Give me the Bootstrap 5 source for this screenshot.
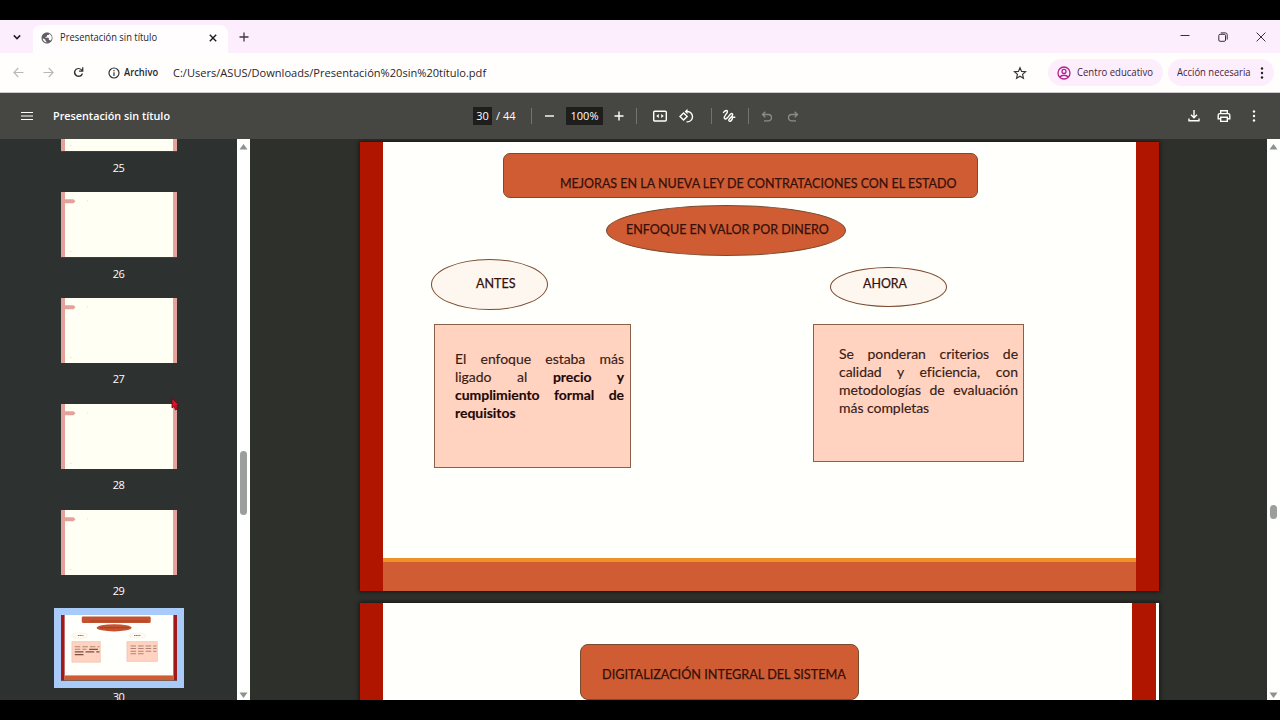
<!DOCTYPE html>
<html lang="es">
<head>
<meta charset="utf-8">
<meta name="viewport" content="width=device-width, initial-scale=1">
<title>Presentación sin título</title>
<link href="https://cdn.jsdelivr.net/npm/bootstrap@5.3.0/dist/css/bootstrap.min.css" rel="stylesheet">
<script src="https://cdn.jsdelivr.net/npm/bootstrap@5.3.0/dist/js/bootstrap.bundle.min.js"></script>
<style>
  body { font-family: "Open Sans", "Noto Sans", sans-serif; font-size: 10.5px; line-height: 1.3; background: #000; color: #2b2528; }
  svg { display: block; flex: none; }
  .window { width: 1280px; height: 720px; padding: 20px 0; }
  .tx { display: inline-block; white-space: nowrap; transform-origin: 0 50%; transform: scaleX(var(--s, 1)); }

  .tabstrip { height: 33px; background: #fdeefe; }
  .tab-search { width: 33px; padding-left: 12px; }
  .tab-open { width: 195px; height: 28px; margin-top: 5px; background: #fffdfd; border-radius: 8px 8px 0 0; padding: 0 7px 3px 8px; }
  .tab-open .tx { margin-left: 7px; width: 144px; flex: none; padding-top: 1px; }
  .tab-open .close-x { margin-left: 5px; }
  .win-btns { padding-right: 14px; gap: 28px; }

  .addressbar { height: 40px; background: #fffefd; border-bottom: 1px solid #cfcacd; }
  .addressbar .tx { padding-top: 1px; }
  .url { font-size: 11.5px; }
  .chip { height: 27px; border-radius: 14px; background: #fdeefd; color: #43233c; }

  .pdfbar { height: 46px; background: #464742; color: #fff; font-size: 11px; }
  .pdfbar .doc-title { font-size: 11.5px; font-weight: 600; padding-top: 1px; }
  .field-box { height: 18px; background: #1e1e1d; line-height: 18px; }
  .vsep { width: 1px; height: 16px; background: #72736f; }

  .viewer { height: 561px; }
  .thumbs { width: 237px; background: #2d312f; color: #fff; font-size: 11px; }
  .thumb-list { margin-top: -52.6px; }
  .thumb { width: 118px; height: 105.8px; margin-left: 60px; }
  .thumb .sheet { width: 116px; height: 65.3px; margin: 0 1px; }
  .thumb .num { height: 40.5px; padding-top: 9px; padding-right: 1px; line-height: 14px; letter-spacing: -.5px; }
  .thumb.active .sheet { box-shadow: 0 0 0 7px #a8cbfa; }

  .sbar { width: 13px; background: #fffffe; padding: 5px 0 2px; }
  .sbar .handle { width: 7px; border-radius: 4px; background: #9c9e9c; }
  .pages { background: #2e302b; padding: 3px 0 0 110px; }
  .page { position: relative; width: 799px; background: #fffffc; box-shadow: 0 0 4px 1px #161713; color: #35100a; font-family: Lato, "Open Sans", sans-serif; font-size: 13.5px; line-height: 18px; }
  .page .tx { -webkit-text-stroke: .25px #35100a; }
  .page-30 { height: 449px; margin-bottom: 12px; }
  .page-31 { height: 449px; }
  .edge { position: absolute; top: 0; bottom: 0; background: #b01500; }
  .shape { position: absolute; border: 1px solid #7a4a30; }
  .orange { background: #cf5c33; }
  .cream { background: #fef7ef; }
  .note { background: #ffd3c0; border-color: #8a6048; font-size: 14px; line-height: 17.9px; letter-spacing: -.04px; color: #3a1a14; -webkit-text-stroke: .15px #3a1a14; }
  .note b { color: #1c0806; }
  .note div { text-align: justify; text-align-last: justify; }
  .note div:last-child { text-align-last: left; }
  .oval { border-radius: 50%; }
  .foot { position: absolute; left: 23px; right: 23px; bottom: 0; height: 33px; border-top: 4px solid #f09128; }
  .pointer { position: absolute; left: 171px; top: 397px; }
</style>
</head>
<body>
<div class="window d-flex flex-column overflow-hidden position-relative">

  <!-- Tab strip -->
  <header class="tabstrip d-flex">
    <div class="tab-search d-flex align-items-center"><svg width="10" height="10" viewBox="0 0 10 10" fill="none" stroke="#222" stroke-width="1.5"><path d="M1.8 3.4 5 6.6l3.200-3.200"/></svg></div>
    <div class="tab-open d-flex align-items-center">
      <svg width="12" height="12" viewBox="0 0 24 24" fill="#5f5f63"><path d="M12 1C5.900 1 1 5.900 1 12s4.900 11 11 11 11-4.900 11-11S18.100 1 12 1zM3.500 12.500l5.500 3v2l2 2v1.400C6.600 20.400 3.200 16.800 3.500 12.500zM18.800 17.300c-.3-.9-1.100-1.500-2.100-1.500h-1v-3.200c0-.6-.5-1.100-1.100-1.100H9V9.300h2c.6 0 1.100-.5 1.100-1.100V6h2.200c1.200 0 2.100-1 2.100-2.100v-.4c3.100 1.300 5.200 4.700 5.200 8.500 0 2-1 4-2.800 5.300z"/></svg>
      <span class="tx" style="--s:.891">Presentación sin título</span>
      <svg class="close-x" width="8" height="8" viewBox="0 0 8 8" stroke="#1d1b1d" stroke-width="1.400"><path d="M.8.8l6.400 6.400M7.200.8.8 7.200"/></svg>
    </div>
    <div class="d-flex align-items-center ps-2 ms-1"><svg style="margin-left:-1px" width="10" height="10" viewBox="0 0 10 10" stroke="#4a3347" stroke-width="1.300"><path d="M5 .5v9M.5 5h9"/></svg></div>
    <div class="win-btns d-flex align-items-center ms-auto">
      <svg width="10" height="10" viewBox="0 0 10 10" stroke="#3a2e38"><path d="M.5 3.500h9"/></svg>
      <svg width="10" height="10" viewBox="0 0 10 10" fill="none" stroke="#3a2e38"><rect x=".8" y="2.300" width="6.700" height="7" rx="1.300"/><path d="M2.700.9H7.500A1.800 1.800 0 0 1 9.200 2.700V7.600"/></svg>
      <svg width="10" height="10" viewBox="0 0 10 10" stroke="#3a2e38"><path d="M.6.6l8.800 8.800M9.400.6.6 9.400"/></svg>
    </div>
  </header>

  <!-- Address bar -->
  <nav class="addressbar d-flex align-items-center">
    <svg style="margin-left:13px" width="11" height="11" viewBox="0 0 11 11" fill="none" stroke="#b9b6b7" stroke-width="1.100"><path d="M10.500 5.500H1M5.300 1 .9 5.500l4.400 4.500"/></svg>
    <svg style="margin-left:19px" width="11" height="11" viewBox="0 0 11 11" fill="none" stroke="#b9b6b7" stroke-width="1.100"><path d="M.5 5.500H10M5.700 1l4.400 4.500L5.700 10"/></svg>
    <svg style="margin-left:18px" width="13" height="13" viewBox="0 0 24 24" fill="#333"><path d="M12 20.500A8.500 8.500 0 1 1 18.600 6.600V2.500h2.400v8h-8V8.100h4.300A6.100 6.100 0 1 0 17.900 14h2.500A8.500 8.500 0 0 1 12 20.500z"/></svg>
    <svg style="margin-left:23px" width="12" height="12" viewBox="0 0 12 12" fill="none" stroke="#333" stroke-width="1.200"><circle cx="6" cy="6" r="5"/><path d="M6 5.300V9M6 3v1.200"/></svg>
    <span class="fw-semibold" style="width:52.500px;padding-left:4px"><span class="tx" style="--s:.89">Archivo</span></span>
    <span class="url"><span class="tx" style="--s:.962">C:/Users/ASUS/Downloads/Presentación%20sin%20título.pdf</span></span>
    <div class="d-flex align-items-center ms-auto">
      <svg width="14" height="14" viewBox="0 0 24 24" fill="none" stroke="#383438" stroke-width="2"><path d="m12 3 2.700 6.200 6.800.6-5.100 4.500 1.500 6.600L12 17.400l-5.900 3.500 1.500-6.600-5.100-4.500 6.800-.6z"/></svg>
      <div class="chip d-flex align-items-center" style="width:115px;margin-left:21px;padding-left:9px">
        <svg width="14" height="14" viewBox="0 0 14 14" fill="none" stroke="#b0208c" stroke-width="1.300"><circle cx="7" cy="7" r="6"/><circle cx="7" cy="5.400" r="2"/><path d="M2.800 11.200C4.500 8.600 9.500 8.600 11.200 11.200"/></svg>
        <span class="tx" style="--s:.909;margin-left:6px">Centro educativo</span>
      </div>
      <div class="chip d-flex align-items-center" style="width:106px;margin:0 6px 0 5px;padding-left:9px">
        <span style="width:80px"><span class="tx" style="--s:.9">Acción necesaria</span></span>
        <svg style="margin-left:3px" width="4" height="14" viewBox="0 0 4 14" fill="#222"><circle cx="2" cy="2.500" r="1.200"/><circle cx="2" cy="7" r="1.200"/><circle cx="2" cy="11.500" r="1.200"/></svg>
      </div>
    </div>
  </nav>

  <!-- PDF viewer toolbar -->
  <div class="pdfbar d-flex align-items-center flex-shrink-0">
    <svg style="margin-left:21px" width="12" height="10" viewBox="0 0 12 10" stroke="#fff" stroke-width="1.200"><path d="M0 1.500h12M0 5h12M0 8.500h12"/></svg>
    <span class="doc-title" style="width:440px;padding-left:20px"><span class="tx" style="--s:.939">Presentación sin título</span></span>
    <span class="field-box text-center" style="width:19px">30</span>
    <span style="margin-left:4px;width:20px" class="text-nowrap">/ 44</span>
    <span class="vsep" style="margin-left:15px"></span>
    <svg style="margin-left:10px" width="16" height="16" viewBox="0 0 16 16" stroke="#fff" stroke-width="1.400"><path d="M3 8h9"/></svg>
    <span class="field-box text-center" style="width:37px;margin-left:8px">100%</span>
    <svg style="margin-left:8px" width="16" height="16" viewBox="0 0 16 16" stroke="#fff" stroke-width="1.400"><path d="M3.500 8h9M8 3.500v9"/></svg>
    <span class="vsep" style="margin-left:9px"></span>
    <svg style="margin-left:15px" width="16" height="16" viewBox="0 0 16 16" fill="none" stroke="#fff" stroke-width="1.400"><rect x="1.700" y="3.200" width="12.600" height="9.800" rx="1"/><path d="M6.800 5.900 4.200 8l2.600 2.100zM9.200 5.900 11.800 8l-2.600 2.100z" fill="#fff" stroke="none"/></svg>
    <svg style="margin-left:10px" width="17" height="16" viewBox="0 0 17 16" fill="none" stroke="#fff" stroke-width="1.400"><path d="M5.600 4.900 9.200 8.500 5.600 12.100 2 8.500z"/><path d="M8.700 3.500h.6a5.200 5.200 0 0 1 0 10.400H8.500"/><path d="M9.500.8v5.400L6.700 3.500z" fill="#fff" stroke="none"/></svg>
    <span class="vsep" style="margin-left:16px"></span>
    <svg style="margin-left:9px" width="16" height="16" viewBox="0 0 16 16" fill="none" stroke="#fff" stroke-width="1.400" stroke-linecap="round"><path d="M2.500 4.400C4.500 2 7 1.800 6.300 4.200 5.700 6 2.500 8.300 3.300 10.300 4.300 12.500 7.500 8.800 9 6.700 11 4.200 12.600 6 11 8.200 9.500 10.300 7.300 11 7.800 12.500 8.500 14.400 11.500 12.500 11.500 9.500M11.500 9.300h2.300"/></svg>
    <span class="vsep" style="margin-left:11px"></span>
    <svg style="margin-left:10px" width="16" height="16" viewBox="0 0 16 16" fill="none" stroke="#8b8c88" stroke-width="1.300"><path d="M6.300 3.700 3.500 6.500l2.800 2.800M3.800 6.500h5.500a3.200 3.200 0 0 1 0 6.400H5"/></svg>
    <svg style="margin-left:10px" width="16" height="16" viewBox="0 0 16 16" fill="none" stroke="#8b8c88" stroke-width="1.300"><path d="M9.700 3.700 12.500 6.500 9.700 9.300M12.200 6.500H6.700a3.200 3.200 0 0 0 0 6.400H11"/></svg>
    <div class="d-flex align-items-center ms-auto" style="padding-right:24.500px">
      <svg width="12" height="14" viewBox="0 0 12 14" fill="none" stroke="#fff" stroke-width="1.400"><path d="M6 1v7.500M3 5.700l3 3 3-3M1 9.500v2.300h10V9.500"/></svg>
      <svg style="margin-left:17px" width="14" height="14" viewBox="0 0 14 14" fill="none" stroke="#fff" stroke-width="1.400"><path d="M3.700 4.500V1.700h6.600v2.800M3.700 9.700H1.200V6.300c0-1 .7-1.700 1.600-1.700h8.400c.9 0 1.600.7 1.600 1.700v3.400h-2.500M3.700 8.200h6.600v4.200H3.700z"/></svg>
      <svg style="margin-left:21px" width="4" height="14" viewBox="0 0 4 14" fill="#fff"><circle cx="2" cy="2.500" r="1.200"/><circle cx="2" cy="7" r="1.200"/><circle cx="2" cy="11.500" r="1.200"/></svg>
    </div>
  </div>

  <!-- Thumbnails and pages -->
  <main class="viewer d-flex overflow-hidden">
    <svg width="0" height="0" class="position-absolute"><defs>
      <symbol id="faded" viewBox="0 0 116 65.300" preserveAspectRatio="none"><path fill="#fffff3" d="M0 0h116v65.300H0z"/><path fill="#e5a29b" d="M0 0h4v65.300H0zM112 0h4v65.300h-4zM4 7.300h8.500l2 2-2 2H4z"/><path fill="#c9c9b8" d="M26 8.500h.7v.7H26zM9.500 59h.7v1h-.7z"/></symbol>
    </defs></svg>
    <aside class="thumbs overflow-hidden flex-shrink-0">
      <div class="thumb-list d-flex flex-column">
        <div class="thumb flex-shrink-0"><svg class="sheet"><use href="#faded"/></svg><div class="num text-center">25</div></div>
        <div class="thumb flex-shrink-0"><svg class="sheet"><use href="#faded"/></svg><div class="num text-center">26</div></div>
        <div class="thumb flex-shrink-0"><svg class="sheet"><use href="#faded"/></svg><div class="num text-center">27</div></div>
        <div class="thumb flex-shrink-0"><svg class="sheet"><use href="#faded"/></svg><div class="num text-center">28</div></div>
        <div class="thumb flex-shrink-0"><svg class="sheet"><use href="#faded"/></svg><div class="num text-center">29</div></div>
        <div class="thumb flex-shrink-0 active">
          <svg class="sheet" viewBox="0 0 799 449" preserveAspectRatio="none">
            <path fill="#fffffc" d="M0 0h799v449H0z"/><path fill="#a01a1c" d="M0 0h25v449H0zM774 0h25v449h-25z"/>
            <path fill="#cf5c33" d="M25 418h749v31H25z"/><path fill="#f09128" d="M25 414h749v6H25z"/>
            <rect x="143" y="11" width="475" height="44" rx="8" fill="#c5522f"/><path d="M198 41h400" stroke="#a5432a" stroke-width="7"/>
            <ellipse cx="366" cy="88" rx="120" ry="25" fill="#c5522f"/><path d="M268 87h200" stroke="#a5432a" stroke-width="8"/>
            <ellipse cx="129" cy="142" rx="58" ry="20" fill="#fffaf2" stroke="#f3e6d9" stroke-width="3"/><ellipse cx="528" cy="142" rx="58" ry="18" fill="#fffaf2" stroke="#f3e6d9" stroke-width="3"/>
            <path d="M116 141h39M503 141h44" stroke="#8b7067" stroke-width="7" stroke-dasharray="9 3"/>
            <path fill="#ffd3c0" stroke="#e5ad98" stroke-width="3" d="M75 183h196v142H75zM454 183h210v136H454z"/>
            <path stroke="#b08272" stroke-width="7" stroke-dasharray="38 14" d="M95 218h170M95 236h80M479 213h179M479 231h179M479 249h179M479 267h90"/>
            <path stroke="#7d5044" stroke-width="8" stroke-dasharray="60 14" d="M194 236h71M95 254h170M95 272h60"/>
          </svg>
          <div class="num text-center">30</div>
        </div>
      </div>
    </aside>
    <div class="sbar d-flex flex-column align-items-center justify-content-between flex-shrink-0">
      <svg width="9" height="6" viewBox="0 0 9 6" fill="#8f918f"><path d="M4.500 0 8.500 5.500h-8z"/></svg>
      <div class="handle" style="height:64px;margin-top:239px;margin-bottom:115px"></div>
      <svg width="9" height="6" viewBox="0 0 9 6" fill="#8f918f"><path d="M4.500 6 .5.5h8z"/></svg>
    </div>

    <section class="pages flex-grow-1 overflow-hidden">
      <div class="page page-30">
        <div class="edge" style="left:0;width:23px"></div>
        <div class="edge" style="right:0;width:23px"></div>
        <div class="foot orange"></div>
        <div class="shape orange" style="left:143px;top:11px;width:475px;height:45px;border-radius:7px;padding:19.500px 0 0 56px"><span class="tx" style="--s:.925">MEJORAS EN LA NUEVA LEY DE CONTRATACIONES CON EL ESTADO</span></div>
        <div class="shape orange oval" style="left:246px;top:63px;width:240px;height:51px;padding:13.500px 0 0 19px"><span class="tx" style="--s:.929">ENFOQUE EN VALOR POR DINERO</span></div>
        <div class="shape cream oval" style="left:70.500px;top:117px;width:117px;height:51px;padding:13.500px 0 0 44px"><span class="tx" style="--s:.93">ANTES</span></div>
        <div class="shape cream oval" style="left:469.500px;top:125px;width:117px;height:40px;padding:5.500px 0 0 32px"><span class="tx" style="--s:.92">AHORA</span></div>
        <div class="shape note" style="left:74px;top:182px;width:197px;height:144px;padding:25px 6px 0 20px">
          <div>El enfoque estaba más</div><div>ligado al <b>precio y</b></div><div><b>cumplimiento formal de</b></div><div><b>requisitos</b></div>
        </div>
        <div class="shape note" style="left:453px;top:182px;width:211px;height:138px;padding:20px 5px 0 25px">
          <div>Se ponderan criterios de</div><div>calidad y eficiencia, con</div><div>metodologías de evaluación</div><div>más completas</div>
        </div>
      </div>
      <div class="page page-31">
        <div class="edge" style="left:0;width:23px"></div>
        <div class="edge" style="right:3px;width:24px"></div>
        <div class="shape orange" style="left:220px;top:41px;width:279px;height:56px;border-radius:8px;padding:20px 0 0 21px"><span class="tx" style="--s:.938">DIGITALIZACIÓN INTEGRAL DEL SISTEMA</span></div>
      </div>
    </section>
    <div class="sbar d-flex flex-column align-items-center justify-content-between flex-shrink-0">
      <svg width="9" height="6" viewBox="0 0 9 6" fill="#8f918f"><path d="M4.500 0 8.500 5.500h-8z"/></svg>
      <div class="handle" style="height:14px;margin-top:181px"></div>
      <svg width="9" height="6" viewBox="0 0 9 6" fill="#8f918f"><path d="M4.500 6 .5.5h8z"/></svg>
    </div>
  </main>

  <svg class="pointer" width="9" height="14" viewBox="0 0 9 14"><path d="M1 1v10l2-1.600L4.500 13l2-1-1.600-3.200L8 8.300z" fill="#e0102c" stroke="#5c0710" stroke-width=".8"/></svg>
</div>
</body>
</html>
